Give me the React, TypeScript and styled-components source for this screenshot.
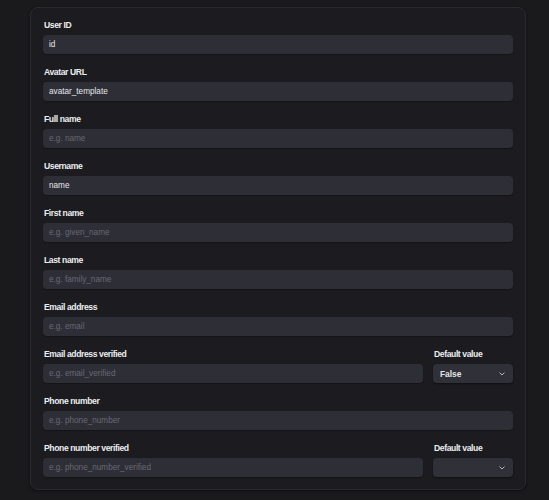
import React, { FC } from "react";
import styled, { createGlobalStyle } from "styled-components";

interface FieldDef {
  label: string;
  value?: string;
  placeholder?: string;
  defaultValue?: string | null;
}

const fields: FieldDef[] = [
  { label: "User ID", value: "id" },
  { label: "Avatar URL", value: "avatar_template" },
  { label: "Full name", placeholder: "e.g. name" },
  { label: "Username", value: "name" },
  { label: "First name", placeholder: "e.g. given_name" },
  { label: "Last name", placeholder: "e.g. family_name" },
  { label: "Email address", placeholder: "e.g. email" },
  { label: "Email address verified", placeholder: "e.g. email_verified", defaultValue: "False" },
  { label: "Phone number", placeholder: "e.g. phone_number" },
  { label: "Phone number verified", placeholder: "e.g. phone_number_verified", defaultValue: "" },
];

const GlobalStyle = createGlobalStyle`
  html, body {
    margin: 0;
    background: #1a1a1d;
    font-family: "Liberation Sans", Arial, sans-serif;
  }
`;

const Chevron: FC = () => (
  <svg width="6" height="4" viewBox="0 0 6 4" fill="none">
    <path d="M0.8 0.8 L3 3 L5.2 0.8" stroke="#b4b4bc" strokeWidth="1" strokeLinecap="round" strokeLinejoin="round" />
  </svg>
);

const Field: FC<{ field: FieldDef }> = ({ field }) => {
  const hasDefault = field.defaultValue !== undefined && field.defaultValue !== null;
  return (
    <StyledRow hasDefault={hasDefault}>
      <StyledGroup>
        <StyledLabel>{field.label}</StyledLabel>
        <StyledInput readOnly value={field.value ?? ""} placeholder={field.placeholder} />
      </StyledGroup>
      {hasDefault && (
        <StyledGroup>
          <StyledLabel>Default value</StyledLabel>
          <StyledSelect>
            <span>{field.defaultValue}</span>
            <Chevron />
          </StyledSelect>
        </StyledGroup>
      )}
    </StyledRow>
  );
};

const App: FC = () => (
  <>
    <GlobalStyle />
    <StyledPage>
      <StyledCard>
        {fields.map((f) => (
          <Field key={f.label} field={f} />
        ))}
      </StyledCard>
    </StyledPage>
  </>
);

const StyledPage = styled.div`
  padding: 7px 23px 11px 30px;
`;

const StyledCard = styled.div`
  background: #1c1c20;
  border: 1px solid #2a2a2f;
  border-radius: 8px;
  box-shadow: 0 1px 3px rgba(0, 0, 0, 0.5);
  padding: 11px 12px 12px;
  display: flex;
  flex-direction: column;
  gap: 12px;
`;

const StyledRow = styled.div<{ hasDefault: boolean }>`
  display: grid;
  grid-template-columns: ${({ hasDefault }) => (hasDefault ? "1fr 80px" : "1fr")};
  gap: 10px;
`;

const StyledGroup = styled.div`
  display: flex;
  flex-direction: column;
  gap: 4px;
  min-width: 0;
`;

const StyledLabel = styled.label`
  font-size: 8.6px;
  line-height: 12px;
  font-weight: 700;
  letter-spacing: -0.4px;
  color: #ededf0;
  padding-left: 1px;
`;

const StyledInput = styled.input`
  box-sizing: border-box;
  height: 19px;
  width: 100%;
  border: none;
  outline: none;
  border-radius: 4px;
  background: #2e2e36;
  color: #e6e6ea;
  font-family: inherit;
  font-size: 8.2px;
  padding: 0 6px;
  box-shadow: 0 1px 1px rgba(0, 0, 0, 0.3);

  &::placeholder {
    color: #686874;
  }
`;

const StyledSelect = styled.div`
  box-sizing: border-box;
  height: 19px;
  border-radius: 4px;
  background: #303039;
  color: #e6e6ea;
  font-size: 8.4px;
  font-weight: 700;
  padding: 0 8px 0 7px;
  display: flex;
  align-items: center;
  justify-content: space-between;
  box-shadow: 0 1px 2px rgba(0, 0, 0, 0.45);
`;

export default App;
